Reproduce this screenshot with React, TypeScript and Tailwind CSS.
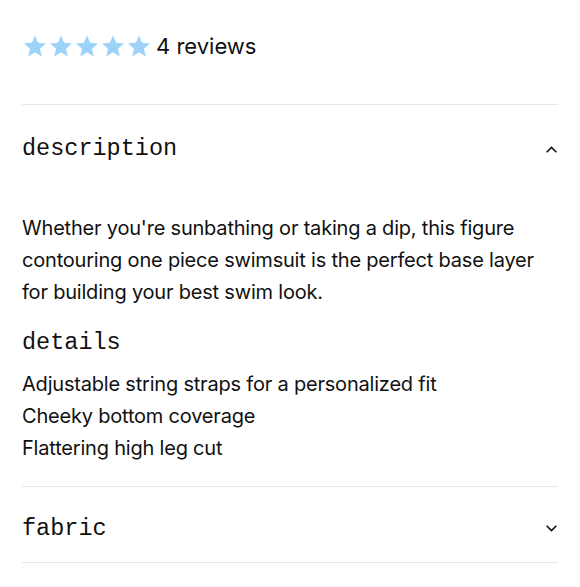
import React from 'react';

const mono = { fontFamily: '"Liberation Mono", "DejaVu Sans Mono", monospace' };

function Star() {
  return (
    <svg viewBox="0 0 24 24" className="w-[24px] h-[24px] fill-[#9dd3f8]">
      <path d="M12 1.5l3.09 7.26 7.91.68-6 5.2 1.8 7.74L12 18.3l-6.8 4.08 1.8-7.74-6-5.2 7.91-.68z" />
    </svg>
  );
}

function Chevron({ up }: { up?: boolean }) {
  return (
    <svg viewBox="0 0 12 12" className="w-[13px] h-[13px]" fill="none" stroke="#111" strokeWidth="1.5">
      {up ? <path d="M1.5 8.5l4.5-4.5 4.5 4.5" /> : <path d="M1.5 3.5l4.5 4.5 4.5-4.5" />}
    </svg>
  );
}

export default function App() {
  const details = [
    'Adjustable string straps for a personalized fit',
    'Cheeky bottom coverage',
    'Flattering high leg cut',
  ];

  return (
    <div className="w-[580px] h-[587px] bg-white px-[22px] text-[#111]" style={{ fontFamily: 'Inter, "Noto Sans", sans-serif' }}>
      <div className="flex items-center h-[105px] pb-[12px] border-b border-[#e8e8e8]">
        <div className="flex gap-[2px] ml-[1px]">
          {[0, 1, 2, 3, 4].map((i) => (
            <Star key={i} />
          ))}
        </div>
        <span className="ml-[5px] text-[22px]">4 reviews</span>
      </div>

      <div className="flex items-center justify-between h-[86px] pt-[2px]">
        <h3 className="text-[23.5px]" style={mono}>description</h3>
        <Chevron up />
      </div>

      <div className="pt-[21px] pb-[22px] border-b border-[#e8e8e8]">
        <p className="text-[20px] leading-[32px] tracking-[-0.2px]">
          Whether you're sunbathing or taking a dip, this figure contouring one piece swimsuit is the perfect base layer for building your best swim look.
        </p>
        <h4 className="text-[23.5px] mt-[18px] mb-[8px] leading-[34px]" style={mono}>details</h4>
        <ul>
          {details.map((d) => (
            <li key={d} className="text-[20px] leading-[32px] tracking-[-0.2px]">{d}</li>
          ))}
        </ul>
      </div>

      <div className="flex items-center justify-between h-[76px] pt-[8px] border-b border-[#e8e8e8]">
        <h3 className="text-[23.5px]" style={mono}>fabric</h3>
        <Chevron />
      </div>
    </div>
  );
}
